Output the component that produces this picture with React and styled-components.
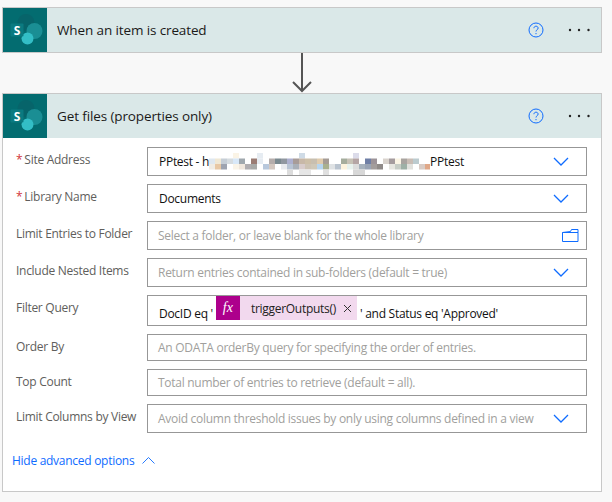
import styled, { createGlobalStyle } from 'styled-components';

const GlobalStyle = createGlobalStyle`
  html, body { margin: 0; padding: 0; background: #f8f8f8; }
  body { font-family: "Open Sans", "Noto Sans", sans-serif; width: 612px; height: 502px; overflow: hidden; }
`;

const BLUE = '#0f6cff';

const Page = styled.div`
  padding: 7px 10px 0 2px;
  width: 612px;
  box-sizing: border-box;
`;

const Card = styled.section`
  border: 1px solid #c8c8c8;
  background: #fff;
`;

const Header = styled.header`
  height: 44px;
  background: #dae8e8;
  display: flex;
  align-items: center;
`;

const LogoBox = styled.div`
  width: 44px;
  height: 44px;
  background: #036c70;
  flex: none;
`;

const Title = styled.div`
  margin-left: 10px;
  flex: 1;
  font-size: 13.5px;
  letter-spacing: -0.12px;
  color: #1b1a19;
`;

const HeaderActions = styled.div`
  display: flex;
  align-items: center;
  gap: 24px;
  margin-right: 11px;
`;

const Connector = styled.div`
  height: 40px;
  display: flex;
  justify-content: center;
  svg { display: block; }
`;

const Body = styled.div`
  padding: 9px 14px 0 0;
  height: 353px;
  box-sizing: border-box;
`;

const Row = styled.div`
  display: grid;
  grid-template-columns: 144px 1fr;
  margin-bottom: 8px;
`;

const Label = styled.label`
  font-size: 12px;
  letter-spacing: -0.28px;
  color: #605e5c;
  padding: 4px 0 0 13px;
  white-space: nowrap;
`;

const Required = styled.span`
  color: #d13438;
  margin-right: 2px;
`;

const Field = styled.div`
  height: ${p => p.$h}px;
  box-sizing: border-box;
  border: 1.5px solid #979797;
  background: #fff;
  display: flex;
  align-items: center;
  padding: 0 7px 0 11px;
  font-size: 12px;
  letter-spacing: -0.28px;
  white-space: nowrap;
`;

const Value = styled.span`
  color: #111;
  padding-top: ${p => p.$drop || 0}px;
`;

const Placeholder = styled.span`
  color: #a19f9d;
  flex: 1;
  margin-left: -1px;
`;

const Spacer = styled.span`
  flex: 1;
`;

const IconSlot = styled.span`
  display: flex;
  margin-right: ${p => p.$right}px;
  flex: none;
`;

const Mosaic = styled.svg`
  display: block;
  margin-top: 4px;
  flex: none;
`;

const Chip = styled.span`
  display: inline-flex;
  align-items: center;
  height: 24px;
  background: #f2d9ee;
  margin: 0 3px 5px 3px;
  color: #222;
`;

const ChipIcon = styled.span`
  width: 24px;
  height: 24px;
  background: #ad008c;
  color: #fff;
  font-family: "Liberation Serif", serif;
  font-style: italic;
  font-size: 14px;
  letter-spacing: 0;
  display: flex;
  align-items: center;
  justify-content: center;
`;

const ChipText = styled.span`
  margin-left: 11px;
`;

const ChipClose = styled.svg`
  margin: 0 5px 0 7px;
`;

const Toggle = styled.div`
  display: flex;
  align-items: center;
  gap: 8px;
  margin: 19px 0 0 9px;
  font-size: 12px;
  letter-spacing: -0.28px;
  color: ${BLUE};
`;

function SharePointLogo() {
  return (
    <svg width="44" height="44" viewBox="0 0 44 44">
      <circle cx="23" cy="14.5" r="8.5" fill="#07646a" />
      <circle cx="31.5" cy="23" r="8" fill="#1a8e94" />
      <circle cx="24.5" cy="30.5" r="6" fill="#33bec6" />
      <rect x="7.5" y="15.5" width="13" height="13" rx="1" fill="#0b7a80" />
      <text x="14" y="26.5" textAnchor="middle" fontSize="12" fontWeight="700" fill="#fff" fontFamily="Open Sans">S</text>
    </svg>
  );
}

function HelpIcon() {
  return (
    <svg width="16" height="16" viewBox="0 0 16 16" fill="none" stroke={BLUE} strokeWidth="1">
      <circle cx="8" cy="8" r="7" />
      <path d="M5.9 6.2C6 4.8 7 4.2 8 4.2c1.2 0 2.1.8 2.1 1.9 0 1.7-2.1 1.6-2.1 3.4" />
      <path d="M8 11v1.2" />
    </svg>
  );
}

function MoreDots() {
  return (
    <svg width="22" height="4" viewBox="0 0 22 4" fill="#222">
      <circle cx="2" cy="2" r="1.2" />
      <circle cx="11" cy="2" r="1.2" />
      <circle cx="20.5" cy="2" r="1.2" />
    </svg>
  );
}

function ChevronDown() {
  return (
    <svg width="16" height="9" viewBox="0 0 16 9" fill="none" stroke={BLUE} strokeWidth="1.3">
      <path d="M1 1l7 7 7-7" />
    </svg>
  );
}

function ChevronUp() {
  return (
    <svg width="13" height="7" viewBox="0 0 13 7" fill="none" stroke={BLUE} strokeWidth="0.9">
      <path d="M.5 6.5l6-6 6 6" />
    </svg>
  );
}

function FolderIcon() {
  return (
    <svg width="17" height="13" viewBox="0 0 17 13" fill="none" stroke={BLUE} strokeWidth="1">
      <path d="M.5 3.5h15.5v9H.5zM.5 3.5l8-1 1-2h6.5v3" />
    </svg>
  );
}

// blurred out part of the site url, one row per line, column -> colour
const blurRows = [
  { 4: '#fbf4e6', 8: '#e6ecf2', 15: '#cfdbe6', 24: '#dcdcea' },
  {
    0: '#dfe8f0', 1: '#f0e8d4', 2: '#c6ced6', 3: '#d6dce0', 4: '#d8e8f8', 5: '#a0a8ae', 7: '#9a7c74', 8: '#e6ecf2',
    10: '#b5adab', 11: '#7b8a90', 12: '#9097a0', 13: '#adb0cf', 14: '#a89c98', 15: '#c8b8a8', 16: '#cdbfa8', 17: '#c8bfb0',
    18: '#e0ccae', 19: '#a59c95', 22: '#a5ad9d', 23: '#c7c2b6', 24: '#b5a5a5', 26: '#6f7fa6', 27: '#9c9398',
    29: '#d9d3cd', 30: '#a59c9e', 31: '#fbf5e5', 32: '#a9a4a0', 33: '#c9bdb5', 34: '#bccbcf',
  },
  {
    0: '#f0ece4', 1: '#e8c8a4', 2: '#9ea4b0', 4: '#faf4e8', 5: '#efe6dc', 6: '#b0adb0', 7: '#a8aaa8', 9: '#b8c8dc',
    10: '#d4c8c0', 12: '#e8eaee', 13: '#b8c4d4', 14: '#aab0b8', 15: '#d8cccc', 16: '#cdc3b5', 17: '#cfc8b8',
    18: '#b6d5ef', 19: '#a9b08f', 20: '#dfe2e4', 21: '#bac4cf', 22: '#fcf3de', 23: '#e7f2ee', 24: '#dcdcdc', 25: '#a7b2bd',
    26: '#99a4b5', 27: '#a39d9c', 28: '#8f8a88', 30: '#e6e6e0', 31: '#c7cdc6', 32: '#9eb0a6', 33: '#e1e1dd', 35: '#d8ccc6', 36: '#e0a888',
  },
  { 13: '#dcdcdc', 15: '#e6e6e6', 16: '#e6e6e6', 19: '#e0e0e0', 24: '#d8d8d8', 25: '#d8d8d8' },
];

function BlurredUrl() {
  return (
    <Mosaic width="221" height="22" viewBox="0 0 221 22">
      {blurRows.map((row, r) =>
        Object.entries(row).map(([col, fill]) => (
          <rect key={`${r}-${col}`} x={col * 6} y={r * 5.5} width="6" height="5.5" fill={fill} />
        ))
      )}
    </Mosaic>
  );
}

export default function App() {
  return (
    <Page>
      <GlobalStyle />
      <Card>
        <Header>
          <LogoBox><SharePointLogo /></LogoBox>
          <Title>When an item is created</Title>
          <HeaderActions><HelpIcon /><MoreDots /></HeaderActions>
        </Header>
      </Card>
      <Connector>
        <svg width="22" height="40" viewBox="0 0 22 40" fill="none" stroke="#555" strokeWidth="2">
          <path d="M11 0v38M2 29l9 9 9-9" />
        </svg>
      </Connector>
      <Card>
        <Header>
          <LogoBox><SharePointLogo /></LogoBox>
          <Title>Get files (properties only)</Title>
          <HeaderActions><HelpIcon /><MoreDots /></HeaderActions>
        </Header>
        <Body>
          <Row>
            <Label><Required>*</Required>Site Address</Label>
            <Field $h={29}>
              <Value>PPtest - h</Value>
              <BlurredUrl />
              <Value>PPtest</Value>
              <Spacer />
              <IconSlot $right={10}><ChevronDown /></IconSlot>
            </Field>
          </Row>
          <Row>
            <Label><Required>*</Required>Library Name</Label>
            <Field $h={29}>
              <Value>Documents</Value>
              <Spacer />
              <IconSlot $right={10}><ChevronDown /></IconSlot>
            </Field>
          </Row>
          <Row>
            <Label>Limit Entries to Folder</Label>
            <Field $h={29}>
              <Placeholder>Select a folder, or leave blank for the whole library</Placeholder>
              <IconSlot $right={0}><FolderIcon /></IconSlot>
            </Field>
          </Row>
          <Row>
            <Label>Include Nested Items</Label>
            <Field $h={29}>
              <Placeholder>Return entries contained in sub-folders (default = true)</Placeholder>
              <IconSlot $right={10}><ChevronDown /></IconSlot>
            </Field>
          </Row>
          <Row>
            <Label>Filter Query</Label>
            <Field $h={31}>
              <Value $drop={6}>DocID eq '</Value>
              <Chip>
                <ChipIcon>fx</ChipIcon>
                <ChipText>triggerOutputs()</ChipText>
                <ChipClose width="9" height="9" viewBox="0 0 9 9" stroke="#333" strokeWidth="1">
                  <path d="M1 1l7 7M8 1l-7 7" />
                </ChipClose>
              </Chip>
              <Value $drop={6}>' and Status eq 'Approved'</Value>
            </Field>
          </Row>
          <Row>
            <Label>Order By</Label>
            <Field $h={27}>
              <Placeholder>An ODATA orderBy query for specifying the order of entries.</Placeholder>
            </Field>
          </Row>
          <Row>
            <Label>Top Count</Label>
            <Field $h={27}>
              <Placeholder>Total number of entries to retrieve (default = all).</Placeholder>
            </Field>
          </Row>
          <Row>
            <Label>Limit Columns by View</Label>
            <Field $h={29}>
              <Placeholder>Avoid column threshold issues by only using columns defined in a view</Placeholder>
              <IconSlot $right={10}><ChevronDown /></IconSlot>
            </Field>
          </Row>
          <Toggle>Hide advanced options <ChevronUp /></Toggle>
        </Body>
      </Card>
    </Page>
  );
}
